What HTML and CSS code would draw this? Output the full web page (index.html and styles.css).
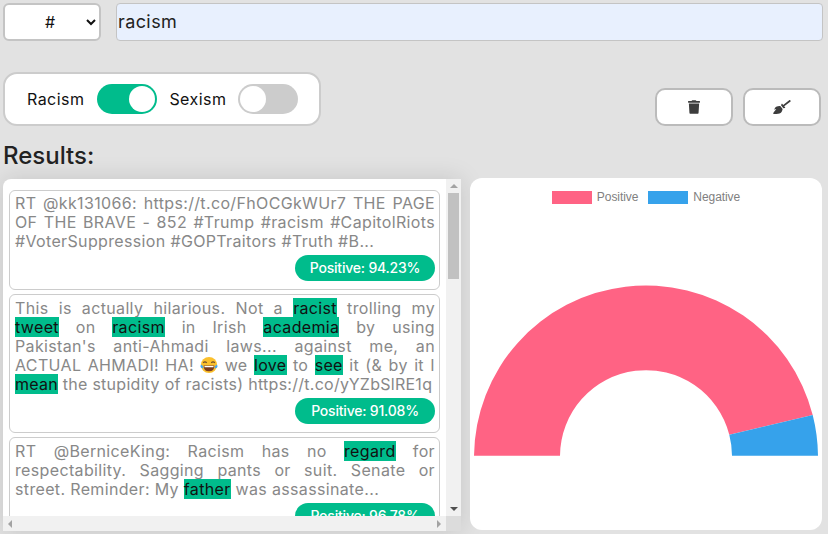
FILE: index.html
```html
<!DOCTYPE html>
<html lang="en">
<head>
  <meta charset="UTF-8">
  <title>Tweet search</title>
  <link rel="stylesheet" href="styles.css">
</head>
<body>

<!-- search -->
<div class="search-row">
  <select class="search-type">
    <option>#</option>
    <option>@</option>
  </select>
  <input class="search-input" type="text" value="racism">
</div>

<!-- filters and actions -->
<div class="tool-row">
  <div class="filter-box">
    <span class="filter-label first">Racism</span>
    <span class="toggle on"><span class="knob"></span></span>
    <span class="filter-label">Sexism</span>
    <span class="toggle"><span class="knob"></span></span>
  </div>
  <div class="actions">
    <button class="icon-btn">
      <svg class="icon-trash" viewBox="0 0 448 512"><path d="M432 32H312l-9.400-18.700A24 24 0 0 0 281.100 0H166.800a23.720 23.720 0 0 0-21.400 13.300L136 32H16A16 16 0 0 0 0 48v32a16 16 0 0 0 16 16h416a16 16 0 0 0 16-16V48a16 16 0 0 0-16-16zM53.200 467a48 48 0 0 0 47.900 45h245.800a48 48 0 0 0 47.900-45L416 128H32z"/></svg>
    </button>
    <button class="icon-btn">
      <svg class="icon-broom" viewBox="0 0 640 512"><path d="M256.470 216.770l86.730 109.180s-16.600 102.360-76.570 150.120C206.660 523.850 0 510.190 0 510.190s3.800-23.140 11-55.430l94.620-112.170c3.970-4.700-.87-11.620-6.650-9.500l-60.400 22.090c14.440-41.660 32.720-80.040 54.600-97.470 59.970-47.760 163.300-40.940 163.300-40.940zM636.530 31.030l-19.860-25c-5.490-6.900-15.520-8.050-22.410-2.560l-232.480 177.800-34.140-42.970c-5.090-6.410-15.140-5.210-18.590 2.210l-25.330 54.550 86.730 109.180 58.800-12.450c8-1.690 11.420-11.200 6.340-17.600l-34.090-42.920 232.480-177.800c6.890-5.480 8.040-15.530 2.550-22.440z"/></svg>
    </button>
  </div>
</div>

<h2 class="results-title">Results:</h2>

<div class="results-row">
  <div class="tweet-panel">
    <div class="tweet-list">
      <div class="tweet">
        <p>RT @kk131066: https://t.co/FhOCGkWUr7 THE PAGE OF THE BRAVE - 852 #Trump #racism #CapitolRiots #VoterSuppression #GOPTraitors #Truth #B...</p>
        <div class="score"><span>Positive: 94.23%</span></div>
      </div>
      <div class="tweet">
        <p>This is actually hilarious. Not a <mark>racist</mark> trolling my <mark>tweet</mark> on <mark>racism</mark> in Irish <mark>academia</mark> by using Pakistan's anti-Ahmadi laws... against me, an ACTUAL AHMADI! HA!
          <svg class="emoji" viewBox="0 0 20 20"><circle cx="10" cy="10" r="9" fill="#fbc02d"/><path d="M3.500 7.500q2-2 4 0M12.500 7.500q2-2 4 0" fill="none" stroke="#6d4c2f" stroke-width="1.300"/><path d="M4 10.500h12q0 6.500-6 6.500t-6-6.500z" fill="#7a3b1e"/><path d="M5 11h10v1.500H5z" fill="#fff"/><path d="M1 9.500q2.500 1 3 4-3 .5-3.500-1.500zM19 9.500q-2.500 1-3 4 3 .5 3.500-1.500z" fill="#42a5f5"/></svg>
          we <mark>love</mark> to <mark>see</mark> it (&amp; by it I <span class="last-line"><mark>mean</mark> the stupidity of racists) https://t.co/yYZbSlRE1q</span></p>
        <div class="score"><span>Positive: 91.08%</span></div>
      </div>
      <div class="tweet">
        <p>RT @BerniceKing: Racism has no <mark>regard</mark> for respectability. Sagging pants or suit. Senate or street. Reminder: My <mark>father</mark> was assassinate...</p>
        <div class="score"><span>Positive: 96.78%</span></div>
      </div>
    </div>
    <!-- scrollbars -->
    <div class="vbar">
      <span class="arrow up"></span>
      <span class="thumb-track"><span class="thumb"></span></span>
      <span class="arrow down"></span>
    </div>
    <div class="hbar">
      <span class="arrow left"></span>
      <span class="arrow right"></span>
    </div>
    <div class="bar-corner"></div>
  </div>

  <div class="chart-card">
    <div class="legend">
      <span class="legend-box pink"></span><span class="legend-text">Positive</span>
      <span class="legend-box blue"></span><span class="legend-text">Negative</span>
    </div>
    <svg class="chart" viewBox="0 0 352 326">
      <path fill="#ff6384" d="M4 251.700A172 172 0 0 1 342.700 211.100L259.300 230.800A86 86 0 0 0 90 251.700Z"/>
      <path fill="#36a2eb" d="M342.700 211.100A172 172 0 0 1 348 251.700H262A86 86 0 0 0 259.300 230.800Z"/>
    </svg>
  </div>
</div>

</body>
</html>
```

FILE: styles.css
```css
html, body { height: 100%; }
body {
  margin: 0;
  padding: 3px 5px 0 3px;
  box-sizing: border-box;
  overflow: hidden;
  background: #e2e2e2;
  font-family: Inter, "Open Sans", sans-serif;
  color: #111;
}

.search-row { display: flex; gap: 15px; }
.search-type {
  width: 98px;
  height: 38px;
  box-sizing: border-box;
  padding-left: 8px;
  border: 2px solid #c4c4c4;
  border-radius: 6px;
  background-color: #fff;
  font-family: inherit;
  font-size: 16px;
  text-align: center;
  color: #111;
}
.search-input {
  flex: 1;
  height: 38px;
  box-sizing: border-box;
  padding: 0 1px 2px;
  border: 1px solid #c4c4c4;
  border-radius: 4px;
  background: #e8f0fe;
  font-family: inherit;
  font-size: 18px;
  letter-spacing: 0.4px;
  color: #222;
}

.tool-row {
  display: flex;
  justify-content: space-between;
  align-items: flex-end;
  margin-top: 31px;
}
.filter-box {
  display: flex;
  align-items: center;
  width: 318px;
  height: 54px;
  box-sizing: border-box;
  padding-left: 22px;
  border: 2px solid #ccc;
  border-radius: 14px;
  background: #fff;
}
.filter-label { font-size: 16px; letter-spacing: 0.45px; margin-right: 12px; }
.filter-label.first { margin-right: 13px; }
.toggle {
  display: flex;
  width: 60px;
  height: 30px;
  box-sizing: border-box;
  padding: 2px;
  border-radius: 15px;
  background: #ccc;
  margin-right: 12px;
}
.toggle.on { background: #00bc8c; justify-content: flex-end; }
.knob { width: 26px; height: 26px; border-radius: 50%; background: #fff; }

.actions { display: flex; gap: 10px; margin-right: 2px; }
.icon-btn {
  display: flex;
  align-items: center;
  justify-content: center;
  width: 78px;
  height: 38px;
  padding: 0;
  border: 2px solid #bbb;
  border-radius: 10px;
  background: #fff;
}
.icon-btn svg { fill: #3d3d3d; }
.icon-trash { width: 12px; height: 14px; }
.icon-broom { width: 18px; height: 14px; }

.results-title {
  margin: 15px 0 7px;
  font-size: 24px;
  line-height: 30px;
  font-weight: 500;
  color: #222;
}

.results-row { display: flex; gap: 9px; }
.tweet-panel {
  display: grid;
  grid-template-columns: 443px 15px;
  grid-template-rows: 337px 15px;
  margin-top: 1px;
  border-radius: 8px 0 0 0;
  background: #fff;
  box-shadow: 0 0 24px rgba(0,0,0,0.13);
}
.tweet-list {
  overflow: hidden;
  padding: 11px 6px 0;
  border-radius: 8px 0 0 0;
}
.tweet {
  display: flex;
  flex-direction: column;
  margin-bottom: 4px;
  padding: 3px 4px 8px 5px;
  border: 1px solid #ccc;
  border-radius: 6px;
}
.tweet + .tweet { padding-top: 4px; }
.tweet p {
  margin: 0;
  min-height: 57px;
  font-size: 16px;
  line-height: 19px;
  letter-spacing: 0.35px;
  color: #888;
  text-align: justify;
}
.tweet mark { background: #00bc8c; color: #111; }
.last-line { white-space: nowrap; letter-spacing: 0.27px; }
.emoji { width: 18px; height: 18px; vertical-align: -3px; }
.score { display: flex; justify-content: flex-end; margin-top: 4px; }
.score span {
  width: 140px;
  height: 26px;
  border-radius: 13px;
  background: #00bc8c;
  color: #fff;
  font-size: 14px;
  font-weight: 500;
  letter-spacing: -0.2px;
  line-height: 26px;
  text-align: center;
}

.vbar {
  display: flex;
  flex-direction: column;
  align-items: center;
  background: #f1f1f1;
}
.thumb-track { flex: 1; align-self: stretch; padding: 0 2px; }
.thumb { display: block; height: 86px; background: #c1c1c1; }
.hbar {
  display: flex;
  justify-content: space-between;
  align-items: center;
  padding: 0 5px;
  background: #f1f1f1;
}
.bar-corner { background: #dcdcdc; }
.arrow { display: block; width: 0; height: 0; border-style: solid; border-color: transparent; }
.arrow.up { margin: 5px 0 5px; border-width: 0 4px 4px; border-bottom-color: #a3a3a3; }
.arrow.down { margin: 5px 0 5px; border-width: 4px 4px 0; border-top-color: #505050; }
.arrow.left { border-width: 4px 4px 4px 0; border-right-color: #a3a3a3; }
.arrow.right { border-width: 4px 0 4px 4px; border-left-color: #a3a3a3; }

.chart-card {
  width: 352px;
  height: 352px;
  border-radius: 12px;
  background: #fff;
}
.legend {
  display: flex;
  justify-content: center;
  align-items: center;
  height: 26px;
  padding-top: 13px;
  box-sizing: border-box;
  font-family: "Liberation Sans", sans-serif;
  font-size: 12px;
  letter-spacing: -0.07px;
  color: #808080;
}
.legend-box { width: 40px; height: 13px; margin-right: 5px; }
.legend-box.pink { background: #ff6384; }
.legend-box.blue { background: #36a2eb; }
.legend-text { margin: 0 10px 2px 0; }
.legend-text:last-child { margin-right: 0; }
.chart { display: block; width: 352px; height: 326px; }
```
